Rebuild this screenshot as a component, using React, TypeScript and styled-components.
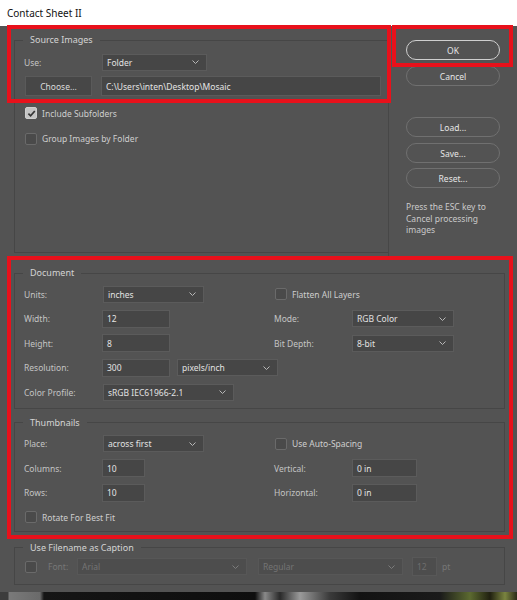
import React from "react";
import styled, { createGlobalStyle } from "styled-components";

const GlobalStyle = createGlobalStyle`
  html, body {
    margin: 0;
    padding: 0;
    background: #535353;
  }
  body {
    font-family: "Noto Sans", "Open Sans", sans-serif;
  }
`;

function Chevron({ disabled }: { disabled?: boolean }) {
  return (
    <svg width="7" height="4" viewBox="0 0 7 4">
      <path d="M0.5 0.5 L3.5 3.5 L6.5 0.5" fill="none" stroke={disabled ? "#7c7c7c" : "#b8b8b8"} strokeWidth="1" />
    </svg>
  );
}

function Check({ checked, label, disabled }: { checked?: boolean; label?: string; disabled?: boolean }) {
  return (
    <s.CheckRow>
      <s.CheckBox $checked={checked}>
        {checked && (
          <svg width="9" height="9" viewBox="0 0 9 9">
            <path d="M1.4 4.6 L3.6 6.8 L7.8 2" fill="none" stroke="#353535" strokeWidth="1.7" />
          </svg>
        )}
      </s.CheckBox>
      {label && <s.CheckLabel $disabled={disabled}>{label}</s.CheckLabel>}
    </s.CheckRow>
  );
}

function Select({ value, width, ml, disabled }: { value: string; width: number; ml?: number; disabled?: boolean }) {
  return (
    <s.Select $w={width} $ml={ml} $disabled={disabled}>
      <span>{value}</span>
      <Chevron disabled={disabled} />
    </s.Select>
  );
}

export default function App() {
  return (
    <>
      <GlobalStyle />
      <s.Window>
        <s.TitleBar>Contact Sheet II</s.TitleBar>
        <s.Body>
          <s.TopSection>
            <s.SourcePane>
              <s.Group $pt={4} $pb={0} $grow $noRight>
                <s.Legend>Source Images</s.Legend>
                <s.Row $h={24}>
                  <s.Label>Use:</s.Label>
                  <Select value="Folder" width={105} />
                </s.Row>
                <s.Row $h={20} $mt={2}>
                  <s.ChooseButton>Choose...</s.ChooseButton>
                  <s.TextField $w={280} $h={20} $ml={9}>
                    C:\Users\inten\Desktop\Mosaic
                  </s.TextField>
                </s.Row>
                <s.Spacer $h={5} />
                <Check checked label="Include Subfolders" />
                <s.Spacer $h={1} />
                <Check label="Group Images by Folder" />
              </s.Group>
            </s.SourcePane>
            <s.ButtonPane>
              <s.PillButton $primary>OK</s.PillButton>
              <s.PillButton $mt={6}>Cancel</s.PillButton>
              <s.PillButton $mt={31}>Load...</s.PillButton>
              <s.PillButton $mt={6}>Save...</s.PillButton>
              <s.PillButton $mt={5}>Reset...</s.PillButton>
              <s.Note>
                Press the ESC key to
                <br />
                Cancel processing
                <br />
                images
              </s.Note>
            </s.ButtonPane>
          </s.TopSection>

          <s.Group $pt={3} $pb={3} $mt={11}>
            <s.Legend>Document</s.Legend>
            <s.Columns>
              <s.Column>
                <s.Row>
                  <s.Label>Units:</s.Label>
                  <Select value="inches" width={101} ml={1} />
                </s.Row>
                <s.Row>
                  <s.Label>Width:</s.Label>
                  <s.TextField $w={68}>12</s.TextField>
                </s.Row>
                <s.Row>
                  <s.Label>Height:</s.Label>
                  <s.TextField $w={68}>8</s.TextField>
                </s.Row>
                <s.Row>
                  <s.Label>Resolution:</s.Label>
                  <s.TextField $w={68}>300</s.TextField>
                  <Select value="pixels/inch" width={101} ml={7} />
                </s.Row>
                <s.Row>
                  <s.Label>Color Profile:</s.Label>
                  <Select value="sRGB IEC61966-2.1" width={131} ml={1} />
                </s.Row>
              </s.Column>
              <s.Column>
                <Check label="Flatten All Layers" />
                <s.Row>
                  <s.Label>Mode:</s.Label>
                  <Select value="RGB Color" width={102} />
                </s.Row>
                <s.Row>
                  <s.Label>Bit Depth:</s.Label>
                  <Select value="8-bit" width={102} />
                </s.Row>
              </s.Column>
            </s.Columns>
          </s.Group>

          <s.Group $pt={3} $pb={1} $mt={8}>
            <s.Legend>Thumbnails</s.Legend>
            <s.Columns>
              <s.Column>
                <s.Row>
                  <s.Label>Place:</s.Label>
                  <Select value="across first" width={101} ml={1} />
                </s.Row>
                <s.Row>
                  <s.Label>Columns:</s.Label>
                  <s.TextField $w={43}>10</s.TextField>
                </s.Row>
                <s.Row>
                  <s.Label>Rows:</s.Label>
                  <s.TextField $w={43}>10</s.TextField>
                </s.Row>
                <Check label="Rotate For Best Fit" />
              </s.Column>
              <s.Column>
                <Check label="Use Auto-Spacing" />
                <s.Row>
                  <s.Label>Vertical:</s.Label>
                  <s.TextField $w={65}>0 in</s.TextField>
                </s.Row>
                <s.Row>
                  <s.Label>Horizontal:</s.Label>
                  <s.TextField $w={65}>0 in</s.TextField>
                </s.Row>
              </s.Column>
            </s.Columns>
          </s.Group>

          <s.Group $pt={1} $pb={5} $mt={10}>
            <s.Legend>Use Filename as Caption</s.Legend>
            <s.Row $h={24}>
              <Check />
              <s.DimLabel>Font:</s.DimLabel>
              <Select value="Arial" width={170} disabled />
              <Select value="Regular" width={145} ml={11} disabled />
              <s.TextField $w={25} $h={19} $ml={9} $disabled>
                12
              </s.TextField>
              <s.Unit>pt</s.Unit>
            </s.Row>
          </s.Group>
        </s.Body>
        <s.PhotoStrip />

        <s.Annotation $x={7} $y={25} $w={384} $h={78} />
        <s.Annotation $x={392} $y={25} $w={121} $h={42} />
        <s.Annotation $x={7} $y={256} $w={506} $h={283} />
      </s.Window>
    </>
  );
}

const s = {
  Window: styled.div`
    position: relative;
    display: flex;
    flex-direction: column;

    width: 517px;
    height: 600px;
    overflow: hidden;

    background: #535353;
    color: #c6c6c6;
    font-size: 8.5px;
  `,
  TitleBar: styled.div`
    display: flex;
    align-items: center;

    height: 26px;
    padding-left: 7px;
    box-sizing: border-box;

    background: #ffffff;
    color: #121212;
    font-size: 10px;
  `,
  Body: styled.div`
    flex: 1;
    display: flex;
    flex-direction: column;
  `,
  TopSection: styled.div`
    display: flex;

    height: 230px;
  `,
  SourcePane: styled.div`
    display: flex;
    flex-direction: column;

    width: 389px;
    padding: 8px 0 3px 14px;
    box-sizing: border-box;

    border-right: 1px solid #474747;
  `,
  ButtonPane: styled.div`
    display: flex;
    flex-direction: column;

    flex: 1;
    padding: 14px 0 0 17px;
  `,
  Group: styled.fieldset<{ $pt: number; $pb: number; $mt?: number; $grow?: boolean; $noRight?: boolean }>`
    flex: ${({ $grow }) => ($grow ? 1 : "none")};

    min-width: 0;
    margin: ${({ $mt, $noRight }) => ($noRight ? "0" : `${$mt ?? 0}px 12px 0 14px`)};
    padding: ${({ $pt, $pb }) => `${$pt}px 9px ${$pb}px 9px`};

    border: 1px solid #464646;
    ${({ $noRight }) => ($noRight ? "border-right: none;" : "")}
  `,
  Legend: styled.legend`
    margin-left: -1px;
    padding: 0 7px;

    color: #d4d4d4;
    font-size: 9px;
    line-height: 12px;
  `,
  Columns: styled.div`
    display: grid;
    grid-template-columns: 250px 1fr;
  `,
  Column: styled.div`
    display: flex;
    flex-direction: column;
  `,
  Row: styled.div<{ $h?: number; $mt?: number }>`
    display: flex;
    align-items: center;

    height: ${({ $h }) => $h ?? 24.5}px;
    margin-top: ${({ $mt }) => $mt ?? 0}px;
  `,
  Spacer: styled.div<{ $h: number }>`
    height: ${({ $h }) => $h}px;
  `,
  Label: styled.div`
    flex-shrink: 0;

    width: 78px;

    color: #c4c4c4;
    white-space: nowrap;
  `,
  DimLabel: styled.div`
    flex-shrink: 0;

    width: 29px;
    margin-left: 11px;

    color: #777777;
  `,
  Unit: styled.div`
    margin-left: 5px;

    color: #777777;
  `,
  Select: styled.div<{ $w: number; $ml?: number; $disabled?: boolean }>`
    display: flex;
    align-items: center;
    justify-content: space-between;

    flex-shrink: 0;
    width: ${({ $w }) => $w}px;
    height: 17px;
    margin-left: ${({ $ml }) => $ml ?? 0}px;
    padding: 0 7px 0 4px;
    box-sizing: border-box;

    background: ${({ $disabled }) => ($disabled ? "#4d4d4d" : "#464646")};
    border: 1px solid ${({ $disabled }) => ($disabled ? "#575757" : "#5b5b5b")};
    color: ${({ $disabled }) => ($disabled ? "#747474" : "#e2e2e2")};
    white-space: nowrap;
  `,
  TextField: styled.div<{ $w: number; $h?: number; $ml?: number; $disabled?: boolean }>`
    display: flex;
    align-items: center;

    flex-shrink: 0;
    width: ${({ $w }) => $w}px;
    height: ${({ $h }) => $h ?? 18}px;
    margin-left: ${({ $ml }) => $ml ?? 0}px;
    padding: 0 4px;
    box-sizing: border-box;

    background: ${({ $disabled }) => ($disabled ? "#4d4d4d" : "#464646")};
    border: 1px solid ${({ $disabled }) => ($disabled ? "#585858" : "#5b5b5b")};
    color: ${({ $disabled }) => ($disabled ? "#6e6e6e" : "#e4e4e4")};
    white-space: nowrap;
  `,
  ChooseButton: styled.div`
    display: flex;
    align-items: center;
    justify-content: center;

    flex-shrink: 0;
    width: 67px;
    height: 20px;
    margin-left: 1px;
    box-sizing: border-box;

    background: #474747;
    border: 1px solid #5a5a5a;
    color: #dcdcdc;
  `,
  CheckRow: styled.div`
    display: flex;
    align-items: center;
    gap: 5px;

    height: 24.5px;
    margin-left: 1px;
  `,
  CheckBox: styled.div<{ $checked?: boolean }>`
    display: flex;
    align-items: center;
    justify-content: center;

    width: 12px;
    height: 12px;
    box-sizing: border-box;

    background: ${({ $checked }) => ($checked ? "#c4c4c4" : "#4a4a4a")};
    border: 1px solid ${({ $checked }) => ($checked ? "#cfcfcf" : "#6a6a6a")};
    border-radius: 2px;
  `,
  CheckLabel: styled.div<{ $disabled?: boolean }>`
    color: ${({ $disabled }) => ($disabled ? "#777" : "#cecece")};
    white-space: nowrap;
  `,
  PillButton: styled.div<{ $primary?: boolean; $mt?: number }>`
    display: flex;
    align-items: center;
    justify-content: center;

    width: 94px;
    height: 20px;
    margin-top: ${({ $mt }) => $mt ?? 0}px;
    box-sizing: border-box;

    border: ${({ $primary }) => ($primary ? "1.5px solid #cfcfcf" : "1px solid #707070")};
    border-radius: 10px;
    color: #e6e6e6;
  `,
  Note: styled.div`
    margin-top: 13px;

    color: #cacaca;
    line-height: 11.5px;
  `,
  PhotoStrip: styled.div`
    height: 8px;

    background: linear-gradient(
      to right,
      #3c3c3c 0px,
      #3c3c3c 8px,
      #7a7a7a 9px,
      #6a6a6a 40px,
      #151515 44px,
      #0e0e0e 255px,
      #8a8a8a 265px,
      #2a2a2a 280px,
      #9a9a9a 300px,
      #3a3a3a 330px,
      #121212 360px,
      #1a1a1a 440px,
      #5c6a30 470px,
      #202010 490px,
      #7a8440 505px,
      #2a2a18 517px
    );
  `,
  Annotation: styled.div<{ $x: number; $y: number; $w: number; $h: number }>`
    position: absolute;
    left: ${({ $x }) => $x}px;
    top: ${({ $y }) => $y}px;

    width: ${({ $w }) => $w}px;
    height: ${({ $h }) => $h}px;
    box-sizing: border-box;

    border: 4px solid #e8111b;
    pointer-events: none;
  `,
};
